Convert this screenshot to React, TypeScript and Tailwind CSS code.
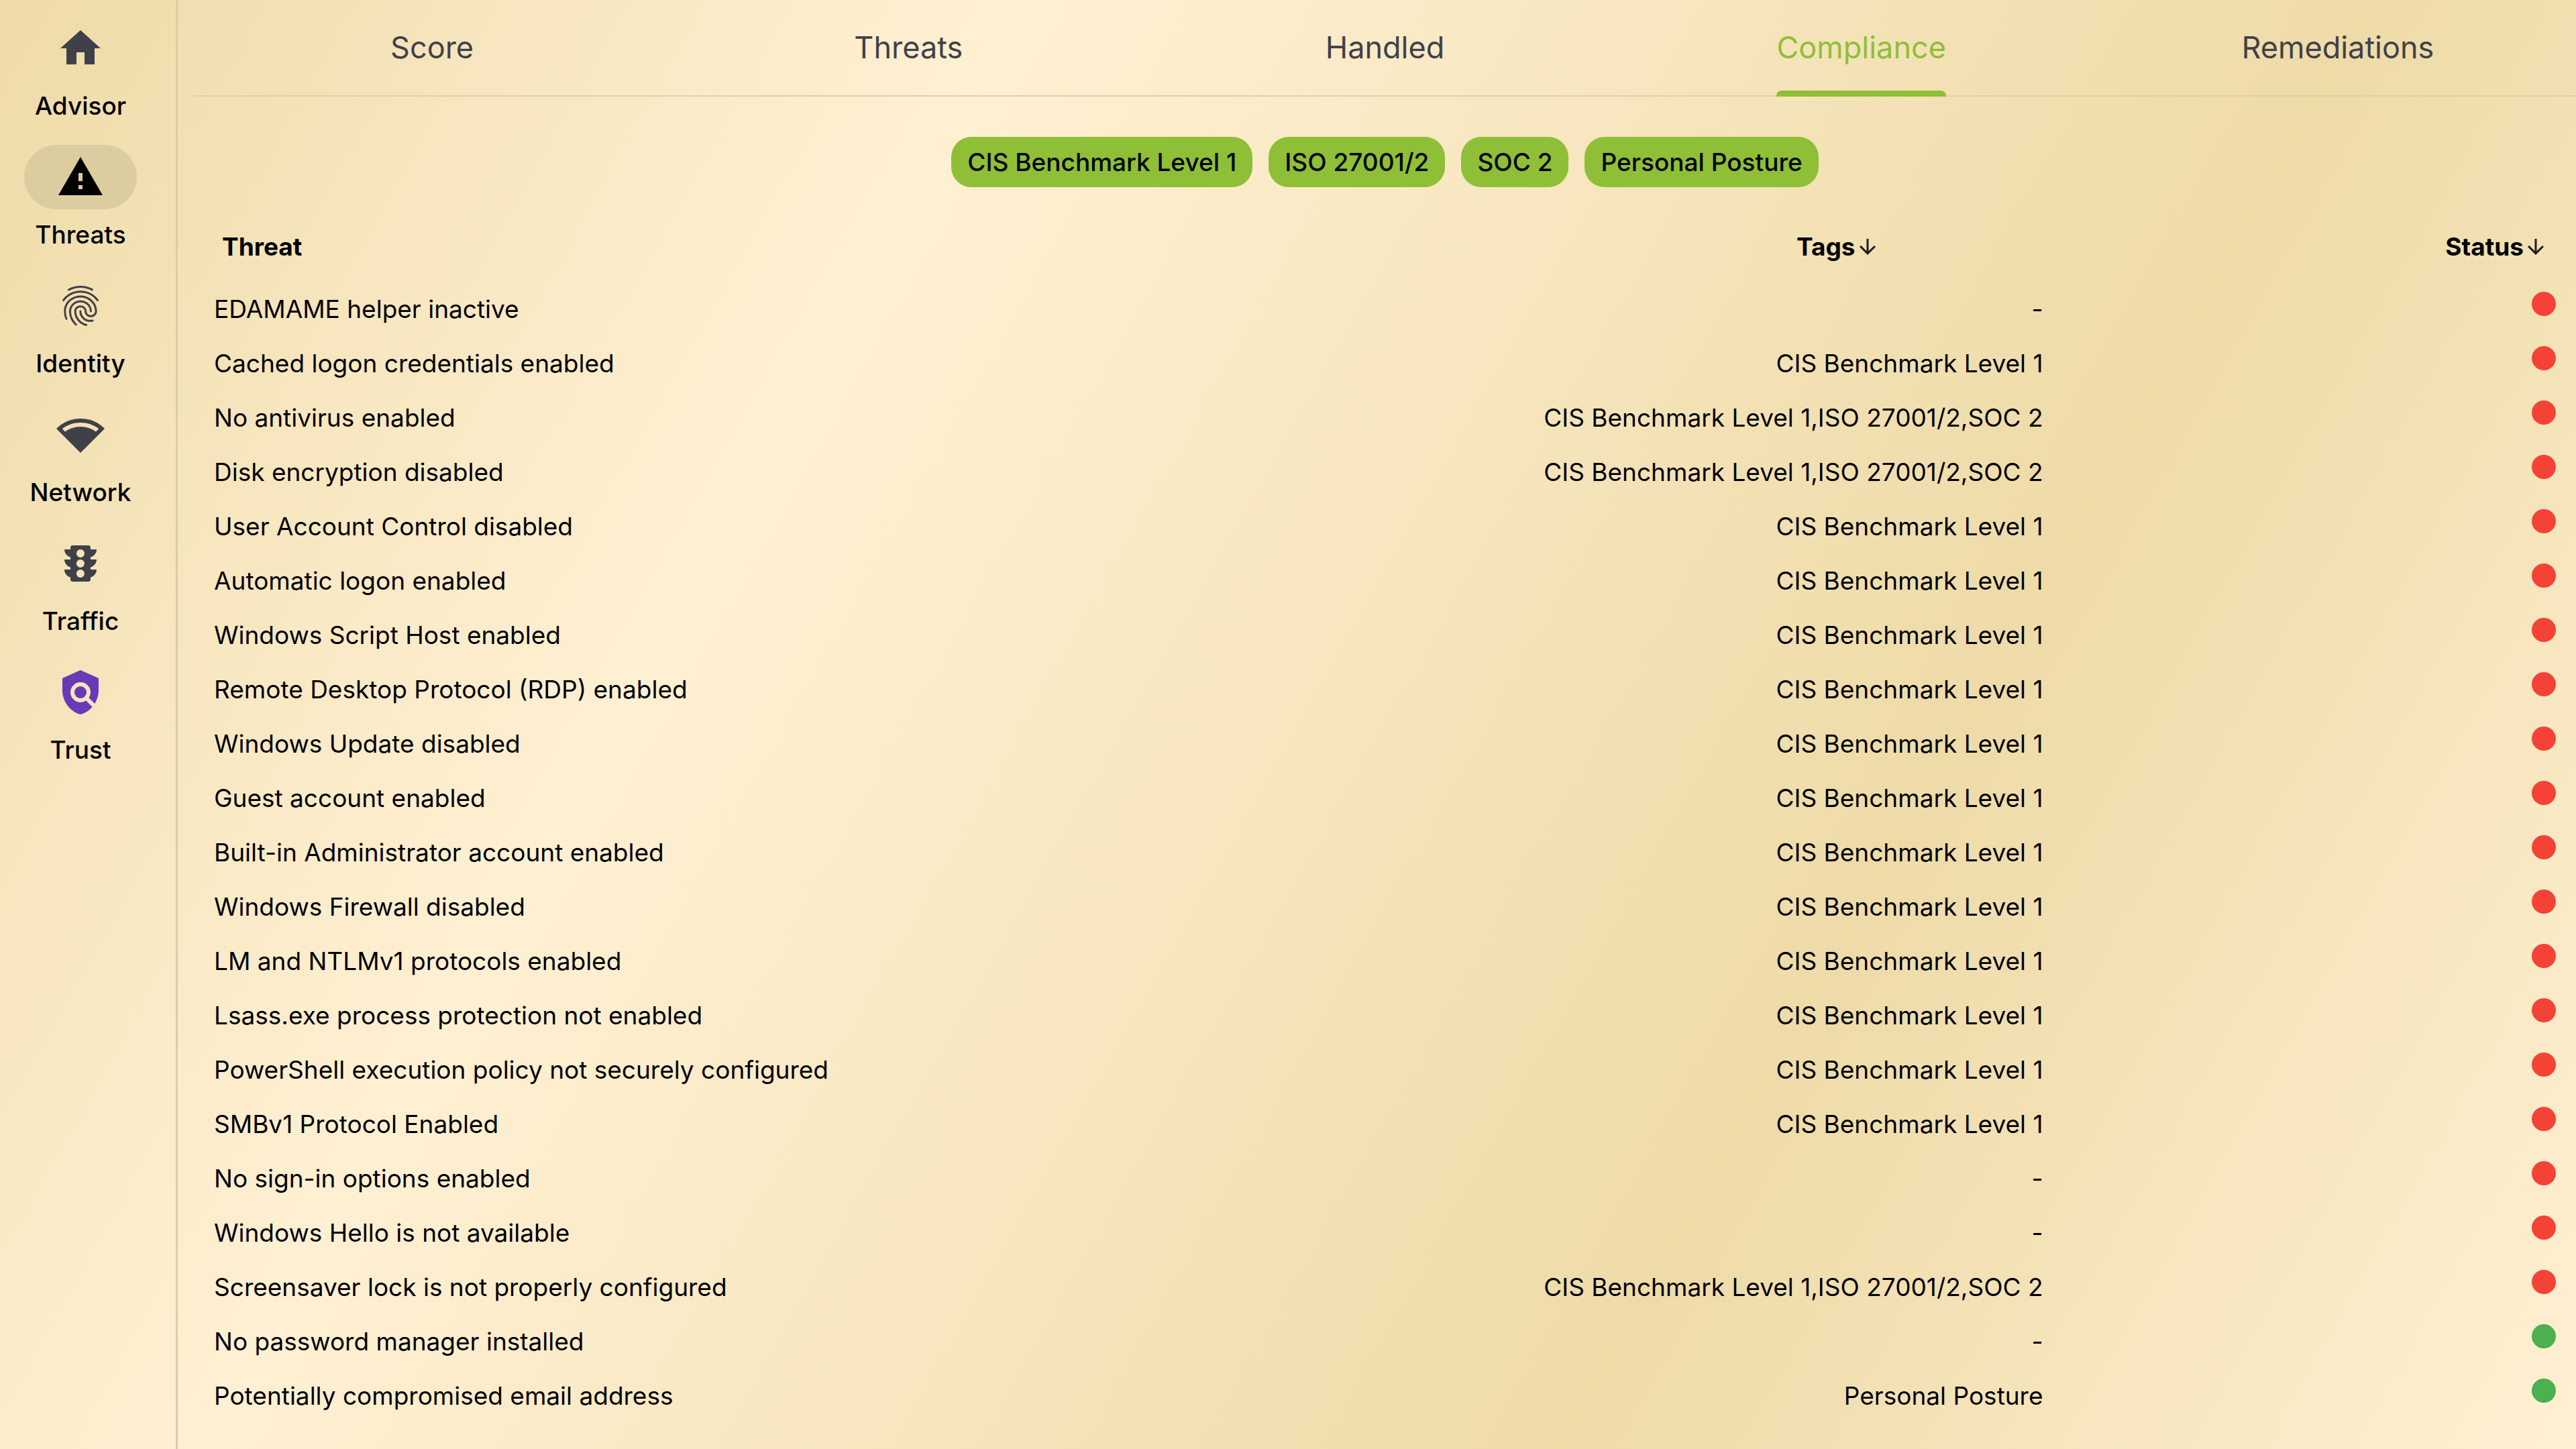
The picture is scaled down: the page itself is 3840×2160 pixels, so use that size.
import React from "react";
import {
  MdHome,
  MdWarning,
  MdFingerprint,
  MdNetworkWifi,
  MdTraffic,
  MdPolicy,
  MdArrowDownward,
} from "react-icons/md";

const navItems = [
  { label: "Advisor", icon: MdHome, color: "text-[#404148]" },
  { label: "Threats", icon: MdWarning, color: "text-black", active: true },
  { label: "Identity", icon: MdFingerprint, color: "text-[#404148]" },
  { label: "Network", icon: MdNetworkWifi, color: "text-[#404148]" },
  { label: "Traffic", icon: MdTraffic, color: "text-[#404148]" },
  { label: "Trust", icon: MdPolicy, color: "text-[#673ab7]" },
];

const tabs = ["Score", "Threats", "Handled", "Compliance", "Remediations"];
const activeTab = "Compliance";

const filters = ["CIS Benchmark Level 1", "ISO 27001/2", "SOC 2", "Personal Posture"];

const CIS = "CIS Benchmark Level 1";
const ALL = "CIS Benchmark Level 1,ISO 27001/2,SOC 2";

const rows: { threat: string; tags: string; ok?: boolean }[] = [
  { threat: "EDAMAME helper inactive", tags: "-" },
  { threat: "Cached logon credentials enabled", tags: CIS },
  { threat: "No antivirus enabled", tags: ALL },
  { threat: "Disk encryption disabled", tags: ALL },
  { threat: "User Account Control disabled", tags: CIS },
  { threat: "Automatic logon enabled", tags: CIS },
  { threat: "Windows Script Host enabled", tags: CIS },
  { threat: "Remote Desktop Protocol (RDP) enabled", tags: CIS },
  { threat: "Windows Update disabled", tags: CIS },
  { threat: "Guest account enabled", tags: CIS },
  { threat: "Built-in Administrator account enabled", tags: CIS },
  { threat: "Windows Firewall disabled", tags: CIS },
  { threat: "LM and NTLMv1 protocols enabled", tags: CIS },
  { threat: "Lsass.exe process protection not enabled", tags: CIS },
  { threat: "PowerShell execution policy not securely configured", tags: CIS },
  { threat: "SMBv1 Protocol Enabled", tags: CIS },
  { threat: "No sign-in options enabled", tags: "-" },
  { threat: "Windows Hello is not available", tags: "-" },
  { threat: "Screensaver lock is not properly configured", tags: ALL },
  { threat: "No password manager installed", tags: "-", ok: true },
  { threat: "Potentially compromised email address", tags: "Personal Posture", ok: true },
];

function Sidebar() {
  return (
    <nav className="flex w-[265px] shrink-0 flex-col items-center gap-6 border-r-3 border-[#dacda8] pt-6 pr-[22px]">
      {navItems.map(({ label, icon: Icon, color, active }) => (
        <button key={label} type="button" className="flex h-42 flex-col items-center gap-3.5">
          <span
            className={`flex h-24 w-42 items-center justify-center rounded-full ${color} ${
              active ? "bg-[#dccda0]" : ""
            }`}
          >
            <Icon className="size-18" />
          </span>
          <span className="text-[37px] leading-12 font-medium">{label}</span>
        </button>
      ))}
    </nav>
  );
}

function TabBar() {
  return (
    <div role="tablist" className="ml-6 grid grid-cols-5 border-b-2 border-[#ded0aa]">
      {tabs.map((tab) => {
        const active = tab === activeTab;
        return (
          <div key={tab} className="flex justify-center">
            <button
              type="button"
              role="tab"
              aria-selected={active}
              className={`-mb-0.5 flex h-36 flex-col justify-between pt-[39px] text-[45px] leading-16 ${
                active ? "text-[#8fbf36]" : "text-[#404148]"
              }`}
            >
              {tab}
              <span className={`h-[9px] w-full rounded-t-lg ${active ? "bg-[#8fbf36]" : ""}`} />
            </button>
          </div>
        );
      })}
    </div>
  );
}

export default function App() {
  return (
    <div className="flex min-h-screen bg-[linear-gradient(119.36deg,#eedba8_0%,#fff0d3_30%,#eedba8_70%,#fff0d3_100%)] font-['Inter',sans-serif] text-black">
      <Sidebar />
      <main className="flex min-w-0 grow flex-col">
        <TabBar />
        <div className="ml-6 flex justify-center gap-6 pt-15">
          {filters.map((filter) => (
            <button
              key={filter}
              type="button"
              className="h-[75px] rounded-[30px] bg-[#8fbf36] px-6 text-[37px] leading-12 font-medium"
            >
              {filter}
            </button>
          ))}
        </div>
        <table className="mt-[49px] w-full table-fixed text-[37px] leading-12">
          <colgroup>
            <col className="w-[44%]" />
            <col />
            <col className="w-[22%]" />
          </colgroup>
          <thead>
            <tr className="h-[92px] align-top">
              <th scope="col" className="pt-4 pl-[66px] text-left font-bold">Threat</th>
              <th scope="col" className="pt-4 pr-[252px] font-bold">
                <button type="button" className="ml-auto flex items-center">
                  Tags
                  <MdArrowDownward className="size-9 text-black/87" />
                </button>
              </th>
              <th scope="col" className="pt-4 pr-[42px] font-bold">
                <button type="button" className="ml-auto flex items-center">
                  Status
                  <MdArrowDownward className="size-9 text-black/87" />
                </button>
              </th>
            </tr>
          </thead>
          <tbody>
            {rows.map(({ threat, tags, ok }) => (
              <tr key={threat} className="h-[81px]">
                <td className="pl-[54px] whitespace-nowrap">{threat}</td>
                <td className="pr-2 text-right whitespace-nowrap">{tags}</td>
                <td className="pr-[30px]">
                  <span
                    role="img"
                    aria-label={ok ? "Passed" : "Failed"}
                    className={`mb-4 ml-auto block size-9 rounded-full ${ok ? "bg-[#4caf50]" : "bg-[#f44336]"}`}
                  />
                </td>
              </tr>
            ))}
          </tbody>
        </table>
      </main>
    </div>
  );
}
